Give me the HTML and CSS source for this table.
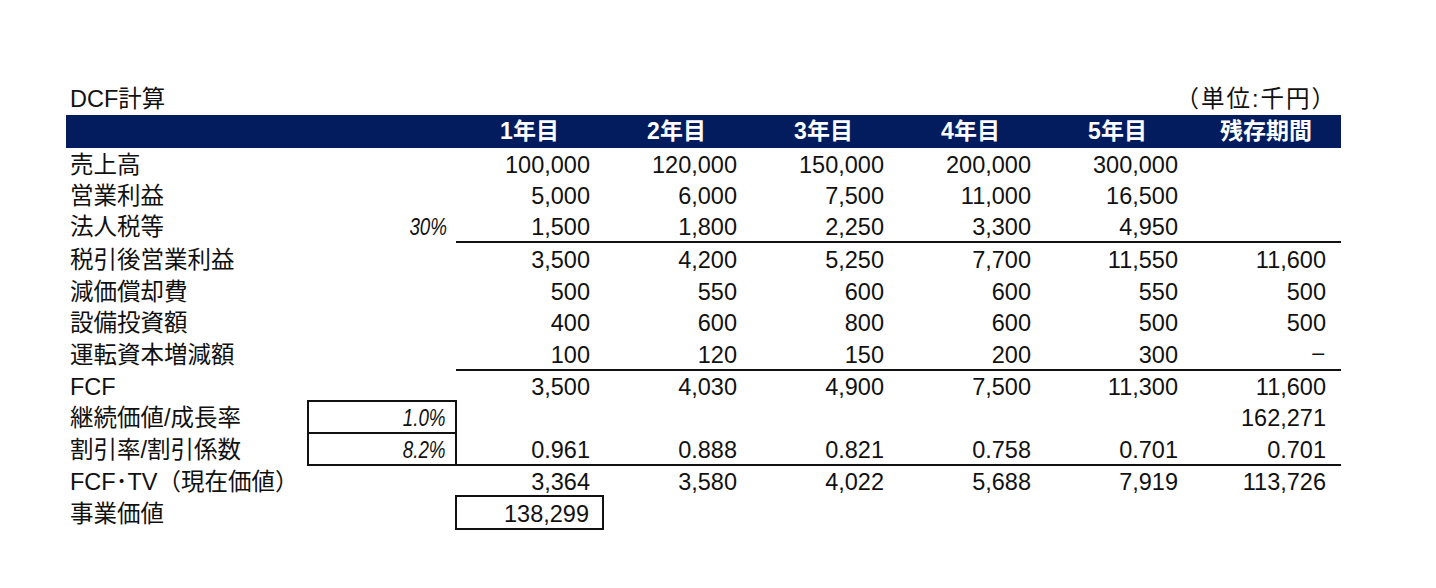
FILE: index.html
```html
<!DOCTYPE html>
<html lang="ja">
<head>
<meta charset="utf-8">
<title>DCF計算</title>
<link rel="stylesheet" href="styles.css">
</head>
<body>
<div class="sheet">
  <div class="title-row">
    <span class="title">DCF計算</span>
    <span class="unit">（単位:千円）</span>
  </div>
  <table class="dcf">
    <colgroup>
      <col class="c-label"><col class="c-rate">
      <col class="c-val"><col class="c-val"><col class="c-val"><col class="c-val"><col class="c-val"><col class="c-last">
    </colgroup>
    <thead>
      <tr class="head">
        <th></th><th></th>
        <th>1年目</th><th>2年目</th><th>3年目</th><th>4年目</th><th>5年目</th><th>残存期間</th>
      </tr>
    </thead>
    <tbody>
      <tr class="r1"><td class="label">売上高</td><td></td><td>100,000</td><td>120,000</td><td>150,000</td><td>200,000</td><td>300,000</td><td></td></tr>
      <tr class="r1"><td class="label">営業利益</td><td></td><td>5,000</td><td>6,000</td><td>7,500</td><td>11,000</td><td>16,500</td><td></td></tr>
      <tr class="r1 under"><td class="label">法人税等</td><td class="rate"><span class="pct">30%</span></td><td>1,500</td><td>1,800</td><td>2,250</td><td>3,300</td><td>4,950</td><td></td></tr>
      <tr class="r2"><td class="label">税引後営業利益</td><td></td><td>3,500</td><td>4,200</td><td>5,250</td><td>7,700</td><td>11,550</td><td>11,600</td></tr>
      <tr class="r2"><td class="label">減価償却費</td><td></td><td>500</td><td>550</td><td>600</td><td>600</td><td>550</td><td>500</td></tr>
      <tr class="r2"><td class="label">設備投資額</td><td></td><td>400</td><td>600</td><td>800</td><td>600</td><td>500</td><td>500</td></tr>
      <tr class="r2 under"><td class="label">運転資本増減額</td><td></td><td>100</td><td>120</td><td>150</td><td>200</td><td>300</td><td><span class="dash">－</span></td></tr>
      <tr class="r3"><td class="label">FCF</td><td></td><td>3,500</td><td>4,030</td><td>4,900</td><td>7,500</td><td>11,300</td><td>11,600</td></tr>
      <tr class="r3"><td class="label">継続価値/成長率</td><td class="rate boxed"><span class="pct">1.0%</span></td><td></td><td></td><td></td><td></td><td></td><td>162,271</td></tr>
      <tr class="r3 under"><td class="label">割引率/割引係数</td><td class="rate boxed"><span class="pct">8.2%</span></td><td>0.961</td><td>0.888</td><td>0.821</td><td>0.758</td><td>0.701</td><td>0.701</td></tr>
      <tr class="r4a"><td class="label">FCF･TV（現在価値）</td><td></td><td>3,364</td><td>3,580</td><td>4,022</td><td>5,688</td><td>7,919</td><td>113,726</td></tr>
      <tr class="r4b"><td class="label">事業価値</td><td></td><td class="boxed">138,299</td><td></td><td></td><td></td><td></td><td></td></tr>
    </tbody>
  </table>
</div>
</body>
</html>
```
FILE: styles.css
```css
html, body {
  margin: 0;
  padding: 0;
  background: #ffffff;
}

body {
  font-family: "Liberation Sans", "Noto Sans CJK JP", sans-serif;
  color: #111111;
}

.sheet {
  padding: 84px 0 0 66px;
  width: 1275px;
}

.title-row {
  display: flex;
  justify-content: space-between;
  align-items: flex-end;
  height: 31px;
  font-size: 23.5px;
  line-height: 31px;
}

.title {
  padding-left: 4px;
}

.unit {
  padding-right: 4px;
  letter-spacing: 2px;
}

.dcf {
  border-collapse: collapse;
  table-layout: fixed;
  width: 1275px;
  font-size: 23.5px;
}

.c-label { width: 242px; }
.c-rate { width: 148px; }
.c-val { width: 147px; }
.c-last { width: 150px; }

.dcf td, .dcf th {
  padding: 4px 13px 0 0;
  text-align: right;
  white-space: nowrap;
  vertical-align: middle;
  line-height: 1;
}

.dcf td:last-child {
  padding-right: 15px;
}

.head th {
  height: 33px;
  background: #021c5e;
  color: #ffffff;
  font-weight: bold;
  text-align: center;
  padding: 0;
  font-size: 23px;
}

.r1 td { height: 27px; }
.r2 td { height: 27.5px; }
.r3 td { height: 26px; }
.r4a td { height: 25px; }
.r4b td { height: 27px; }

.dcf td.label {
  text-align: left;
  padding-left: 4px;
  padding-right: 0;
}

.dcf td.rate {
  font-style: italic;
  padding-right: 9px;
}

.pct {
  display: inline-block;
  transform: scaleX(0.8);
  transform-origin: right center;
}

.dash {
  display: inline-block;
  transform: scaleX(0.7);
  transform-origin: right center;
}

.under td:nth-child(n+3) {
  border-bottom: 2px solid #111111;
}

.dcf td.boxed {
  border: 2px solid #111111;
}
```
